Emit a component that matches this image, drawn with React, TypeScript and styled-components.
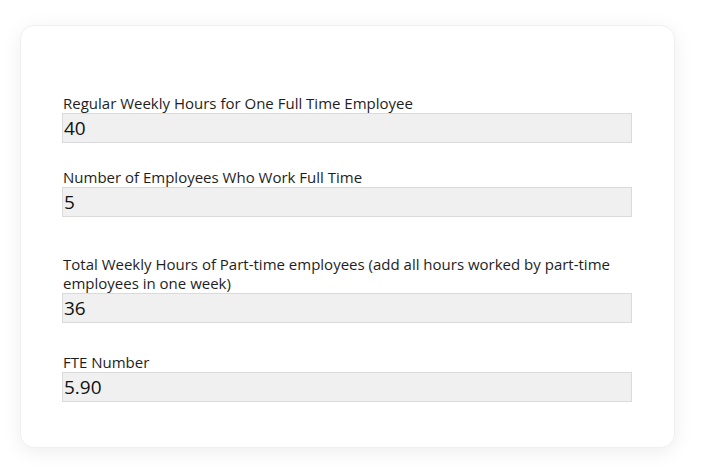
import React from "react";
import styled, { createGlobalStyle } from "styled-components";

const Global = createGlobalStyle`
  html, body { margin: 0; padding: 0; background: #ffffff; }
  body { font-family: "Open Sans", "Noto Sans", sans-serif; }
`;

const Page = styled.div`
  width: 702px;
  height: 469px;
  box-sizing: border-box;
  padding: 25px 27px 21px 20px;
  background: #ffffff;
`;

const Card = styled.div`
  box-sizing: border-box;
  height: 423px;
  background: #ffffff;
  border: 1px solid #f0f0f0;
  border-radius: 14px;
  box-shadow: 0 4px 20px rgba(0, 0, 0, 0.07);
  padding: 68px 42px 0 41px;
  display: flex;
  flex-direction: column;
`;

const Field = styled.div<{ $gap: number }>`
  display: flex;
  flex-direction: column;
  margin-bottom: ${(p) => p.$gap}px;
`;

const Label = styled.label`
  font-size: 15px;
  line-height: 19px;
  color: #1e1e1e;
  padding-left: 1px;
`;

const Value = styled.div`
  box-sizing: border-box;
  height: 30px;
  background: #f0f0f0;
  border: 1px solid #dadada;
  font-size: 19px;
  line-height: 29px;
  color: #111;
  padding-left: 1px;
`;

const fields = [
  { label: "Regular Weekly Hours for One Full Time Employee", value: "40", gap: 25 },
  { label: "Number of Employees Who Work Full Time", value: "5", gap: 38 },
  {
    label:
      "Total Weekly Hours of Part-time employees (add all hours worked by part-time employees in one week)",
    value: "36",
    gap: 30,
  },
  { label: "FTE Number", value: "5.90", gap: 0 },
];

export default function App() {
  return (
    <>
      <Global />
      <Page>
        <Card>
          {fields.map((f) => (
            <Field key={f.label} $gap={f.gap}>
              <Label>{f.label}</Label>
              <Value>{f.value}</Value>
            </Field>
          ))}
        </Card>
      </Page>
    </>
  );
}
